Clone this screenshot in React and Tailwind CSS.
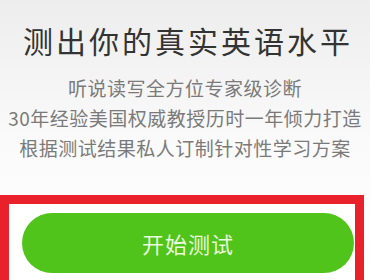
import React from "react";

const lines = [
  "听说读写全方位专家级诊断",
  "30年经验美国权威教授历时一年倾力打造",
  "根据测试结果私人订制针对性学习方案",
];

export default function App() {
  return (
    <div
      className="w-[370px] h-[280px] overflow-hidden bg-gradient-to-b from-[#ededed] via-[#fafafa] to-white"
      style={{ fontFamily: '"Noto Sans CJK SC", "Noto Sans", sans-serif' }}
    >
      {/* heading */}
      <div className="pt-[25px] flex justify-center">
        <h1 className="text-[30px] leading-[30px] tracking-[3px] pl-[6px] whitespace-nowrap text-[#333] font-normal">
          测出你的真实英语水平
        </h1>
      </div>

      {/* intro lines */}
      <div className="mt-[18px] flex flex-col items-center text-[19px] leading-[30px] tracking-[0.5px] whitespace-nowrap text-[#7a7a7a]">
        {lines.map((t) => (
          <p key={t}>{t}</p>
        ))}
      </div>

      {/* highlighted start button */}
      <div className="mt-[32px] w-[364px] h-[100px] border-[9px] border-[#e8212b] bg-white pl-[13px] pr-px pt-[9px]">
        <button className="w-full h-[60px] rounded-full bg-[#50c41a] text-[22px] tracking-[1px] text-[#eaf9dc]">
          开始测试
        </button>
      </div>
    </div>
  );
}
